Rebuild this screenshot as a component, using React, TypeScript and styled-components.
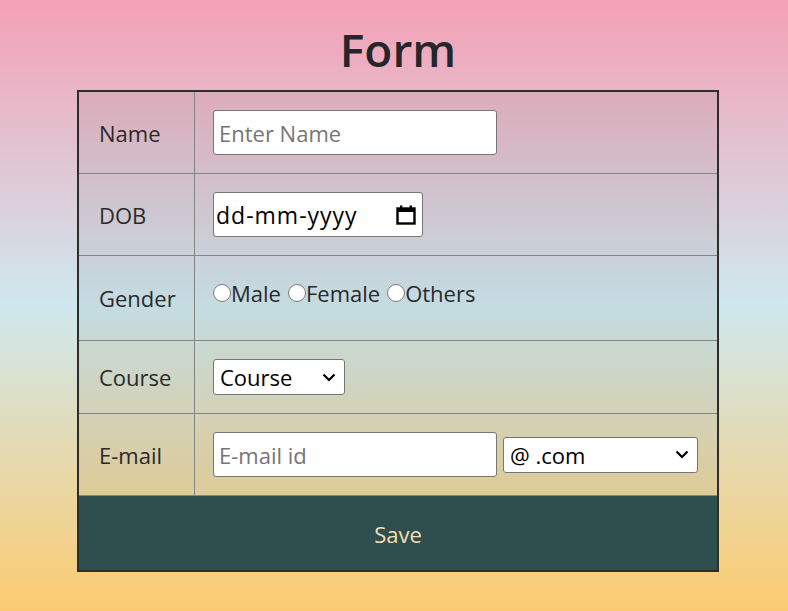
import styled, { createGlobalStyle } from "styled-components";

const GlobalStyle = createGlobalStyle`
    html, body {
        margin: 0;
        padding: 0;
    }
    body {
        min-height: 100vh;
        background: linear-gradient(180deg, #f4a0b5 0%, #cfe8ee 50%, #fccb70 100%);
        font-family: "Open Sans", "Noto Sans", sans-serif;
        color: #2a2a2a;
    }
`;

const chevron =
    "url(\"data:image/svg+xml;utf8,<svg xmlns='http://www.w3.org/2000/svg' width='14' height='9' viewBox='0 0 14 9'><path d='M1.5 1.5 L7 7 L12.5 1.5' fill='none' stroke='black' stroke-width='2.2'/></svg>\")";

const Page = styled.div`
    display: flex;
    flex-direction: column;
    align-items: center;
    padding-left: 8px;
    min-height: 611px;
    box-sizing: border-box;
`;

const Title = styled.h1`
    margin: 22px 0 13px;
    font-size: 46px;
    line-height: 55px;
    font-weight: 600;
    color: #25252a;
`;

const Table = styled.table`
    width: 642px;
    border-collapse: collapse;
    border: 2px solid #2d2d2d;
    background: rgba(0, 0, 0, 0.05);
`;

const Label = styled.td`
    width: 95px;
    padding: 0 0 0 20px;
    border: 1px solid #858585;
    font-size: 22px;
    vertical-align: middle;
`;

const Field = styled.td<{ $top?: number; $bottom?: number }>`
    padding: ${(p) => p.$top ?? 18}px 18px ${(p) => p.$bottom ?? 18}px;
    border: 1px solid #858585;
    vertical-align: top;
    font-size: 22px;
    line-height: 30px;
`;

const TextInput = styled.input<{ $w: number }>`
    display: block;
    box-sizing: border-box;
    width: ${(p) => p.$w}px;
    height: 45px;
    padding: 0 5px;
    border: 1px solid #767676;
    border-radius: 3px;
    background: #fff;
    font-family: inherit;
    font-size: 22px;
    color: #111;
    outline: none;
    &::placeholder {
        color: #767676;
    }
`;

const DateBox = styled.div`
    display: flex;
    align-items: center;
    justify-content: space-between;
    box-sizing: border-box;
    width: 210px;
    height: 45px;
    padding: 0 6px 0 2px;
    border: 1px solid #767676;
    border-radius: 3px;
    background: #fff;
    font-size: 23px;
    color: #000;
    letter-spacing: 1px;
`;

const RadioGroup = styled.div`
    display: flex;
    align-items: center;
    flex-wrap: wrap;
`;

const RadioLabel = styled.label`
    display: inline-flex;
    align-items: center;
    margin-right: 7px;
    font-size: 22px;
    color: #2a2a2a;
`;

const Radio = styled.input`
    width: 18px;
    height: 18px;
    margin: 0;
    accent-color: #3a6ea5;
`;

const Select = styled.select<{ $w: number }>`
    appearance: none;
    box-sizing: border-box;
    width: ${(p) => p.$w}px;
    height: 36px;
    padding: 0 24px 0 6px;
    border: 1px solid #767676;
    border-radius: 3px;
    background: #fff ${chevron} no-repeat right 8px center;
    font-family: inherit;
    font-size: 22px;
    color: #000;
`;

const EmailRow = styled.div`
    display: flex;
    align-items: center;
    gap: 6px;
`;

const SaveCell = styled.td`
    height: 72px;
    padding: 2px 0 0;
    background: #2f4f4f;
    color: #f5deb3;
    text-align: center;
    font-size: 22px;
    border: 1px solid #858585;
    cursor: pointer;
`;

function CalendarIcon() {
    return (
        <svg width="20" height="22" viewBox="0 0 20 22">
            <rect x="1.5" y="4.5" width="17" height="15" fill="none" stroke="#000" strokeWidth="2.4" />
            <rect x="1.5" y="4.5" width="17" height="3.5" fill="#000" />
            <rect x="4" y="1.5" width="2.4" height="4" fill="#000" />
            <rect x="13.6" y="1.5" width="2.4" height="4" fill="#000" />
        </svg>
    );
}

export default function App() {
    return (
        <Page>
            <GlobalStyle />
            <Title>Form</Title>
            <Table>
                <tbody>
                    <tr>
                        <Label>Name</Label>
                        <Field>
                            <TextInput $w={284} placeholder="Enter Name" />
                        </Field>
                    </tr>
                    <tr>
                        <Label>DOB</Label>
                        <Field>
                            <DateBox>
                                <span>dd-mm-yyyy</span>
                                <CalendarIcon />
                            </DateBox>
                        </Field>
                    </tr>
                    <tr>
                        <Label>Gender</Label>
                        <Field $top={22} $bottom={32}>
                            <RadioGroup>
                                <RadioLabel>
                                    <Radio type="radio" name="gender" />
                                    Male
                                </RadioLabel>
                                <RadioLabel>
                                    <Radio type="radio" name="gender" />
                                    Female
                                </RadioLabel>
                                <RadioLabel>
                                    <Radio type="radio" name="gender" />
                                    Others
                                </RadioLabel>
                            </RadioGroup>
                        </Field>
                    </tr>
                    <tr>
                        <Label>Course</Label>
                        <Field>
                            <Select $w={132} defaultValue="course">
                                <option value="course">Course</option>
                                <option value="bca">BCA</option>
                                <option value="mca">MCA</option>
                            </Select>
                        </Field>
                    </tr>
                    <tr>
                        <Label>E-mail</Label>
                        <Field>
                            <EmailRow>
                                <TextInput $w={284} placeholder="E-mail id" />
                                <Select $w={195} defaultValue="com">
                                    <option value="com">@ .com</option>
                                    <option value="in">@ .in</option>
                                </Select>
                            </EmailRow>
                        </Field>
                    </tr>
                    <tr>
                        <SaveCell colSpan={2}>Save</SaveCell>
                    </tr>
                </tbody>
            </Table>
        </Page>
    );
}
